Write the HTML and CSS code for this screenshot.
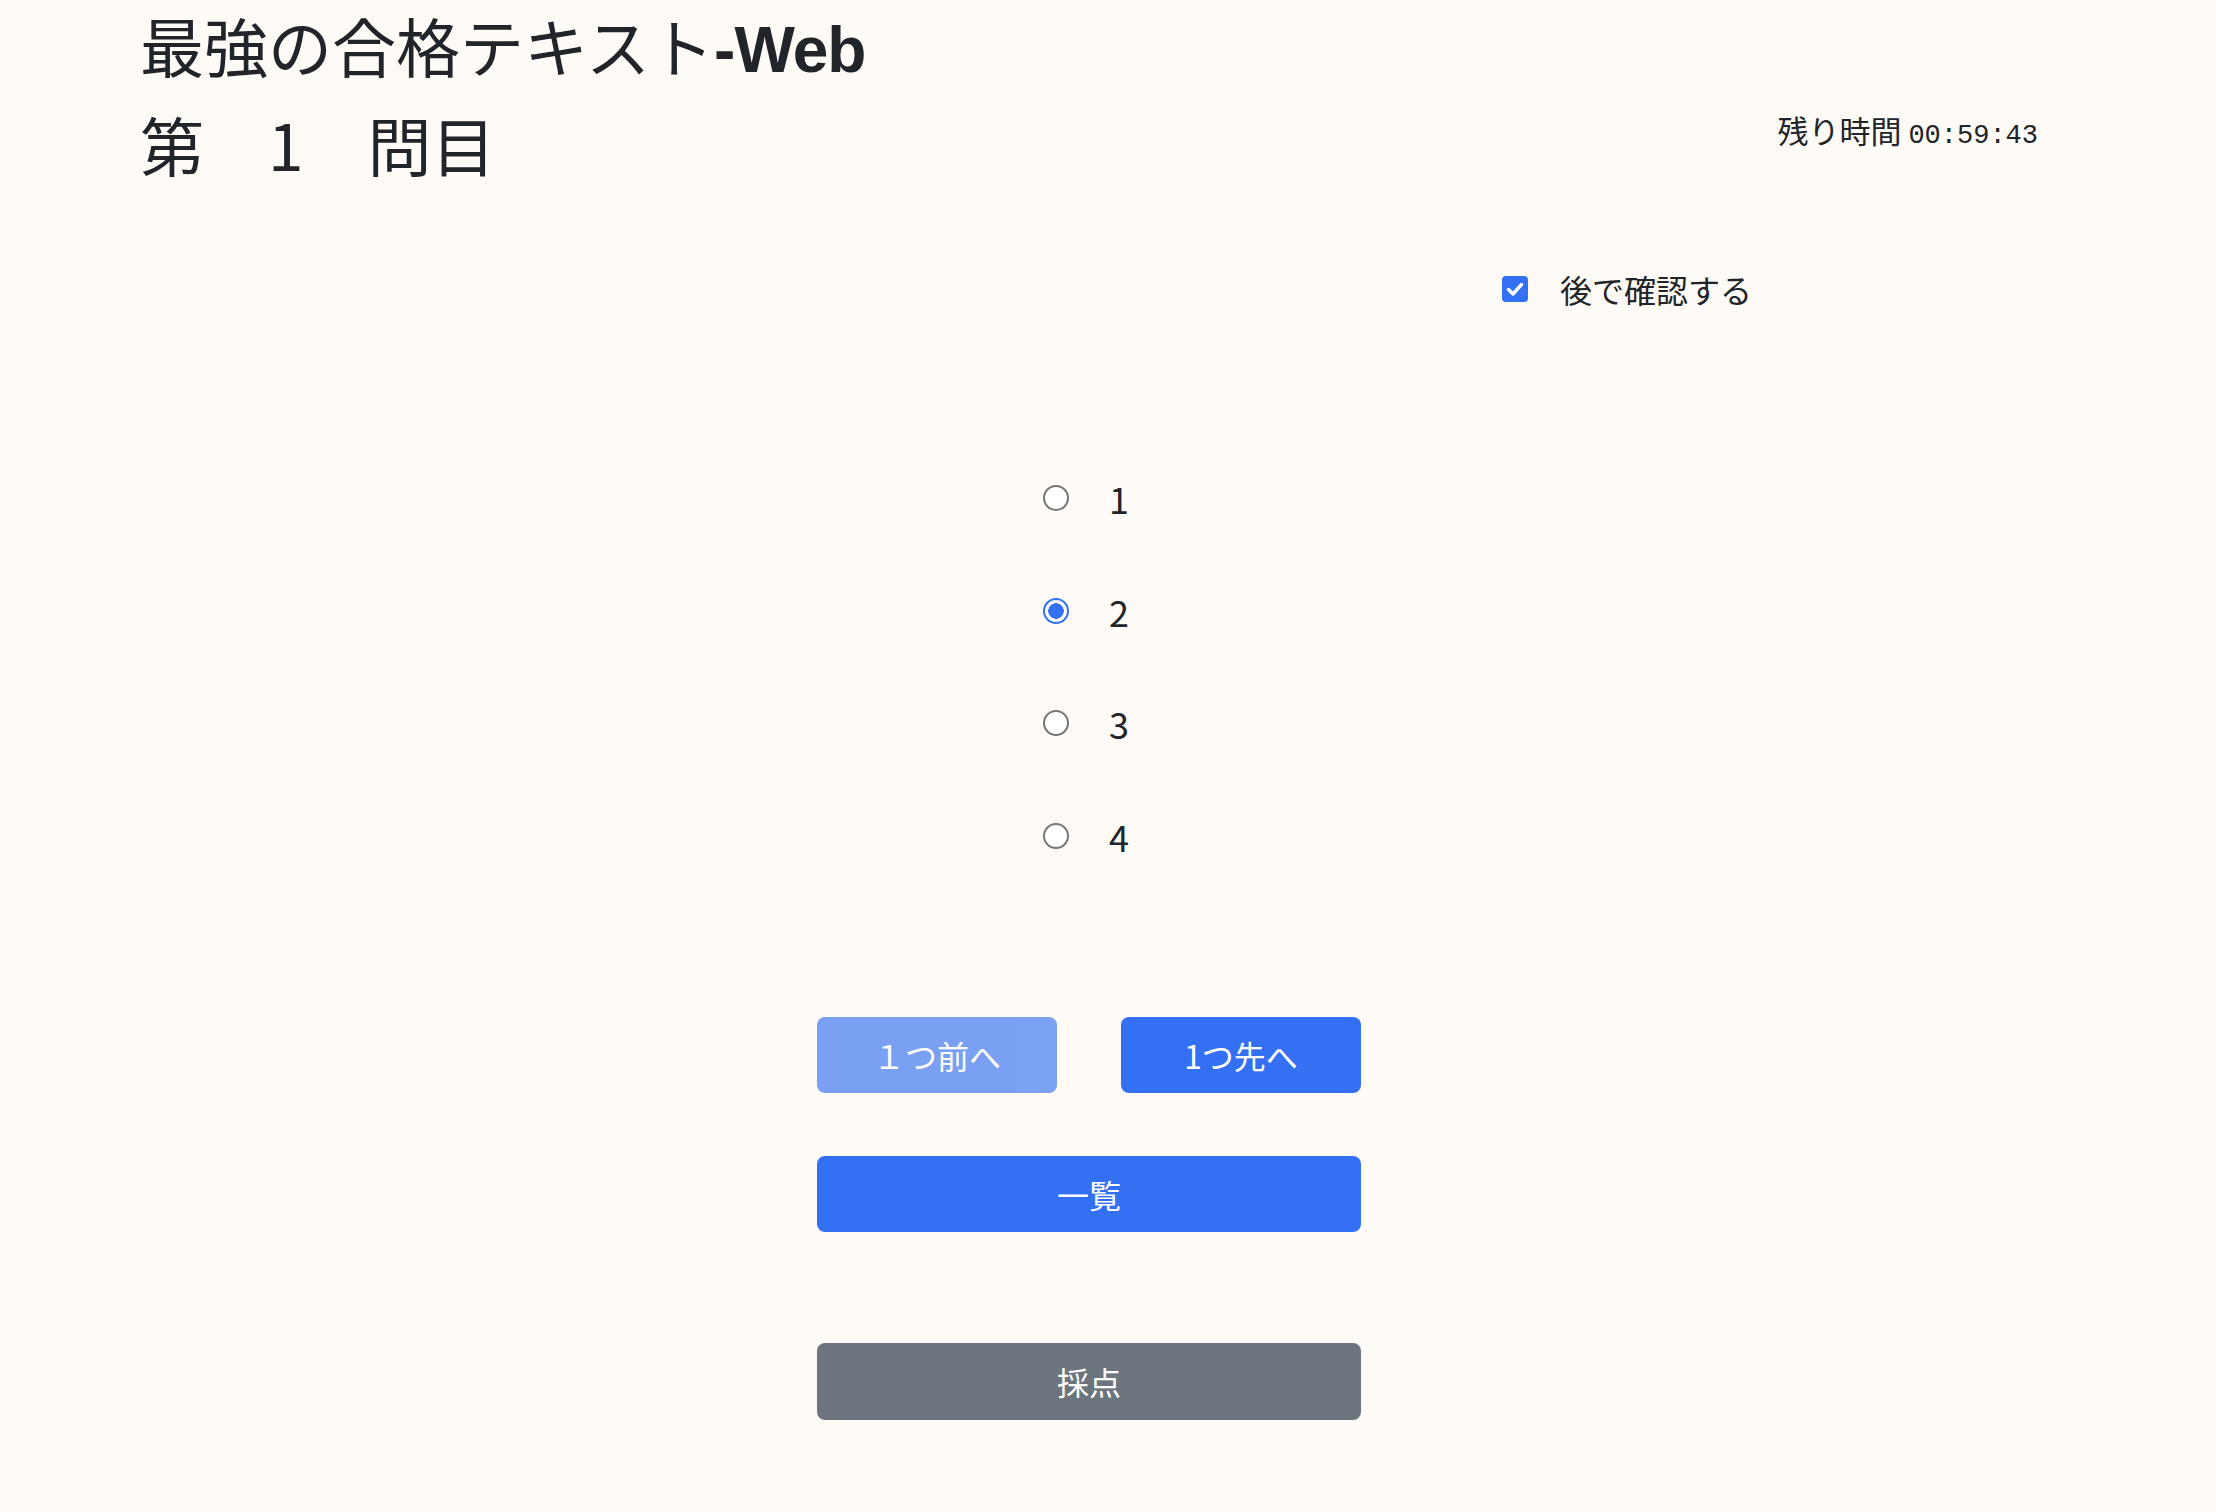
FILE: index.html
```html
<!DOCTYPE html>
<html lang="ja">
<head>
<meta charset="utf-8">
<title>最強の合格テキスト-Web</title>
<link rel="stylesheet" href="styles.css">
</head>
<body>
<div class="page">
  <h1 class="title">最強の合格テキスト<span class="latin">-Web</span></h1>
  <div class="head-row">
    <h2 class="qno">第　1　問目</h2>
    <div class="timer">残り時間 <code class="clock">00:59:43</code></div>
  </div>
  <div class="later-row">
    <label class="later">
      <span class="checkbox checked">
        <svg viewBox="0 0 26 26" width="26" height="26"><path d="M6.5 13.5 L11 18 L19.5 8.5" fill="none" stroke="#fff" stroke-width="3.4" stroke-linecap="round" stroke-linejoin="round"/></svg>
      </span>
      <span class="later-text">後で確認する</span>
    </label>
  </div>
  <div class="main-col">
    <div class="choices">
      <label class="choice"><span class="radio"></span><span class="choice-text">1</span></label>
      <label class="choice"><span class="radio checked"></span><span class="choice-text">2</span></label>
      <label class="choice"><span class="radio"></span><span class="choice-text">3</span></label>
      <label class="choice"><span class="radio"></span><span class="choice-text">4</span></label>
    </div>
    <div class="nav-row">
      <button class="btn btn-primary disabled">１つ前へ</button>
      <button class="btn btn-primary">1つ先へ</button>
    </div>
    <button class="btn btn-primary btn-wide list-btn">一覧</button>
    <button class="btn btn-secondary btn-wide score-btn">採点</button>
  </div>
</div>
</body>
</html>
```
FILE: styles.css
```css
html, body {
  margin: 0;
  padding: 0;
  background: #fefbf6;
  color: #212529;
  font-family: "Noto Sans CJK JP", "Noto Sans", sans-serif;
}
.page {
  padding: 6px 178px 0 140px;
  min-height: 1512px;
  box-sizing: border-box;
}
.title {
  margin: 0;
  font-size: 64px;
  line-height: 77px;
  font-weight: 400;
}
.title .latin {
  font-family: "Liberation Sans", Arial, sans-serif;
  font-weight: 700;
  letter-spacing: -1px;
}
.head-row {
  display: flex;
  justify-content: space-between;
  align-items: flex-start;
  margin-top: 16px;
}
.qno {
  margin: 0;
  font-size: 64px;
  line-height: 77px;
  font-weight: 400;
}
.timer {
  margin-top: 5px;
  font-size: 31px;
  line-height: 40px;
}
.clock {
  font-family: "Liberation Mono", "DejaVu Sans Mono", monospace;
  font-size: 27px;
  color: #212529;
}
.later-row {
  margin-top: 85px;
  padding-left: 1362px;
}
.later {
  display: inline-flex;
  align-items: center;
  gap: 32px;
}
.checkbox {
  width: 26px;
  height: 26px;
  border-radius: 4px;
  box-sizing: border-box;
  border: 2px solid #767676;
  display: inline-block;
}
.checkbox.checked {
  background: #3470f3;
  border: none;
}
.checkbox svg { display: block; }
.later-text {
  font-size: 32px;
  line-height: 44px;
}
.main-col {
  width: 544px;
  margin-left: 677px;
  display: flex;
  flex-direction: column;
  margin-top: 167px;
}
.choices {
  display: flex;
  flex-direction: column;
  align-items: center;
  gap: 72.5px;
}
.choice {
  display: flex;
  align-items: center;
  gap: 40px;
  height: 40px;
  width: 86px;
  margin-left: -6px;
}
.radio {
  width: 26px;
  height: 26px;
  border-radius: 50%;
  box-sizing: border-box;
  border: 2px solid #767676;
  background: #fff;
  flex: none;
}
.radio.checked {
  border: 2px solid #3470f3;
  background: radial-gradient(circle, #3470f3 0 7.5px, #fff 8px);
}
.choice-text {
  font-size: 36px;
  line-height: 40px;
}
.nav-row {
  display: flex;
  justify-content: space-between;
  margin-top: 161px;
}
.btn {
  height: 76px;
  width: 240px;
  border: none;
  border-radius: 8px;
  color: #fff;
  font-family: "Noto Sans CJK JP", "Noto Sans", sans-serif;
  font-size: 32px;
  padding: 0;
}
.btn-primary { background: #3470f3; }
.btn-primary.disabled { opacity: 0.65; }
.btn-secondary { background: #6c757d; }
.btn-wide { width: 544px; }
.list-btn { margin-top: 63px; }
.score-btn { margin-top: 111px; height: 77px; }
```
